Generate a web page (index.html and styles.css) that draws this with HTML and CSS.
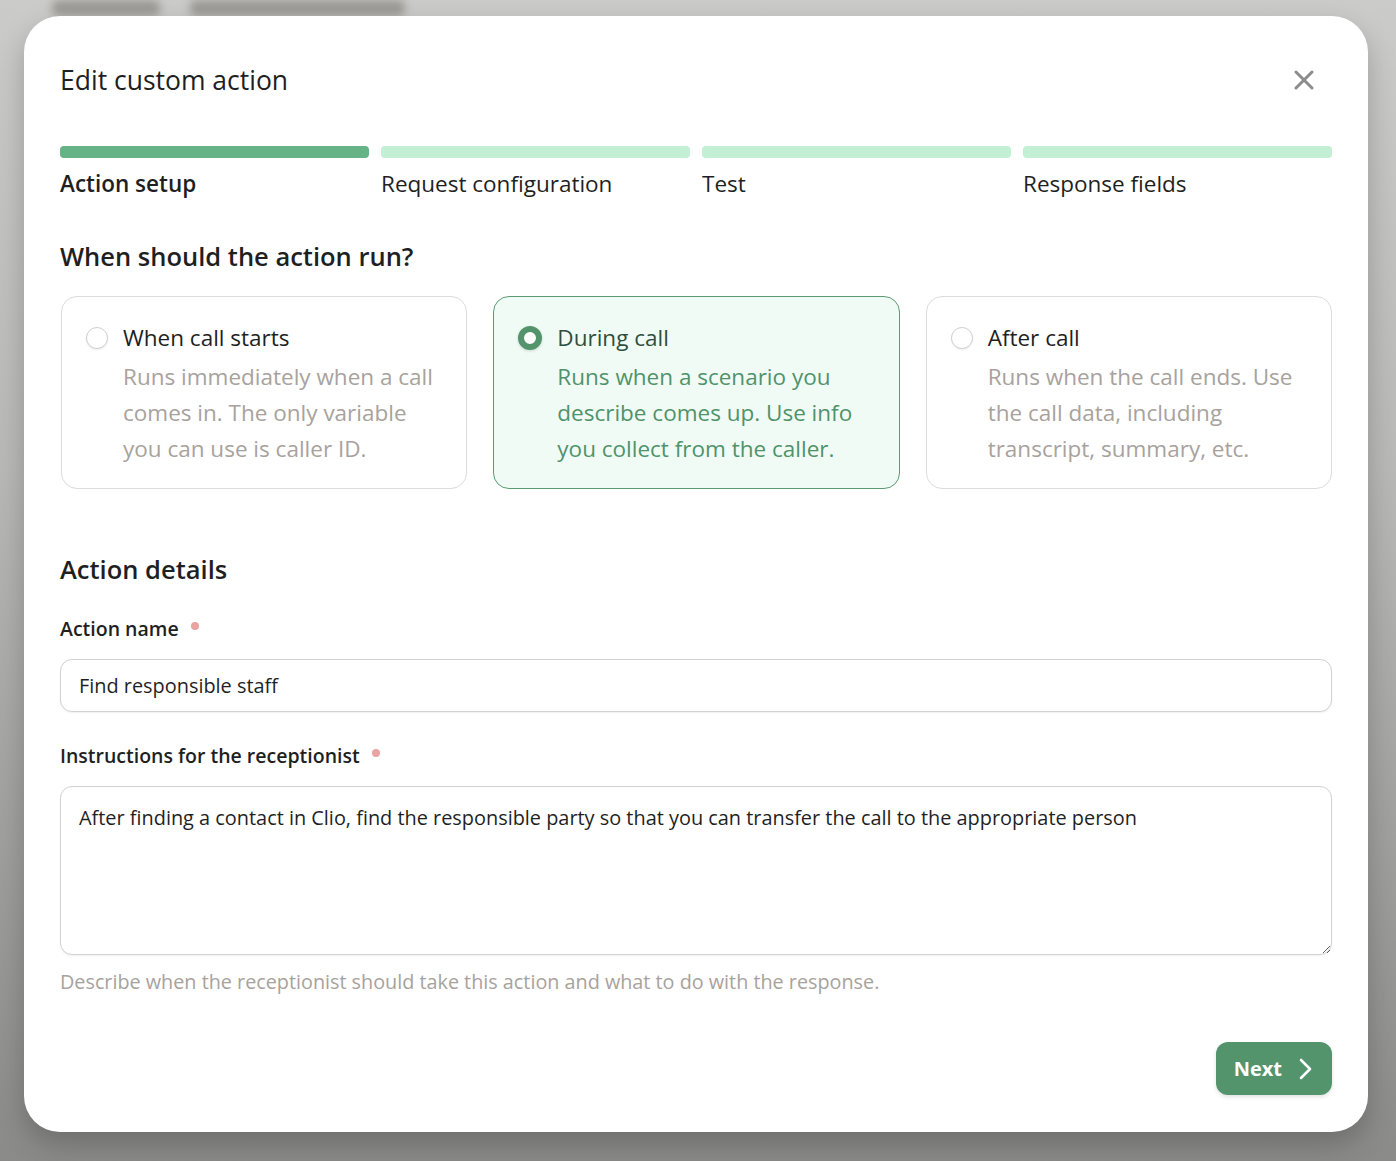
FILE: index.html
```html
<!DOCTYPE html>
<html lang="en">
<head>
    <meta charset="UTF-8">
    <meta name="viewport" content="width=device-width, initial-scale=1.0">
    <title>Edit custom action</title>
    <link rel="stylesheet" href="styles.css">
</head>
<body>
    <div class="backdrop">
        <div class="ghost-tabs">
            <span class="ghost ghost-a"></span>
            <span class="ghost ghost-b"></span>
        </div>
    </div>

    <div class="modal">
        <div class="modal-header">
            <h1>Edit custom action</h1>
            <button class="close-btn" aria-label="Close">
                <svg width="20" height="20" viewBox="0 0 20 20"><path d="M2 2 L18 18 M18 2 L2 18" stroke="#8c8c8c" stroke-width="3" stroke-linecap="round"/></svg>
            </button>
        </div>

        <div class="steps">
            <div class="step active"><div class="bar"></div><span>Action setup</span></div>
            <div class="step"><div class="bar"></div><span>Request configuration</span></div>
            <div class="step"><div class="bar"></div><span>Test</span></div>
            <div class="step"><div class="bar"></div><span>Response fields</span></div>
        </div>

        <h2 class="question">When should the action run?</h2>

        <div class="options">
            <div class="option">
                <span class="radio"></span>
                <div>
                    <div class="option-title">When call starts</div>
                    <div class="option-desc">Runs immediately when a call comes in. The only variable you can use is caller ID.</div>
                </div>
            </div>
            <div class="option selected">
                <span class="radio"></span>
                <div>
                    <div class="option-title">During call</div>
                    <div class="option-desc">Runs when a scenario you describe comes up. Use info you collect from the caller.</div>
                </div>
            </div>
            <div class="option">
                <span class="radio"></span>
                <div>
                    <div class="option-title">After call</div>
                    <div class="option-desc">Runs when the call ends. Use the call data, including transcript, summary, etc.</div>
                </div>
            </div>
        </div>

        <h2 class="section-title">Action details</h2>

        <label class="field-label">Action name <span class="req"></span></label>
        <input class="text-input" type="text" value="Find responsible staff">

        <label class="field-label second">Instructions for the receptionist <span class="req"></span></label>
        <textarea class="text-area">After finding a contact in Clio, find the responsible party so that you can transfer the call to the appropriate person</textarea>
        <div class="hint">Describe when the receptionist should take this action and what to do with the response.</div>

        <div class="footer">
            <button class="next-btn">Next
                <svg width="14" height="22" viewBox="0 0 14 22"><path d="M3 2 L12 11 L3 20" fill="none" stroke="#fff" stroke-width="2.6" stroke-linecap="round" stroke-linejoin="round"/></svg>
            </button>
        </div>
    </div>
</body>
</html>
```

FILE: styles.css
```css
* {
    box-sizing: border-box;
}
body {
    margin: 0;
    height: 1161px;
    overflow: hidden;
    font-family: "Open Sans", "Noto Sans", sans-serif;
    color: #1f1f1f;
    background: linear-gradient(180deg, #cbcbc9 0%, #b9b9b7 40%, #8a8a88 100%);
    padding: 16px 28px 0 24px;
}
.backdrop {
    position: absolute;
    top: 0;
    left: 0;
    right: 0;
    height: 16px;
}
.ghost-tabs {
    display: flex;
    gap: 30px;
    padding: 0 0 0 52px;
}
.ghost {
    display: block;
    height: 16px;
    border-radius: 6px;
    background: #9b9a96;
    filter: blur(4px);
}
.ghost-a { width: 108px; }
.ghost-b { width: 215px; }

.modal {
    position: relative;
    width: 1344px;
    height: 1116px;
    background: #fff;
    border-radius: 36px;
    padding: 36px 36px 37px;
    display: flex;
    flex-direction: column;
    box-shadow: 0 12px 28px rgba(0, 0, 0, 0.22);
}
.modal-header {
    display: flex;
    justify-content: space-between;
    align-items: center;
    height: 56px;
}
.modal-header h1 {
    margin: 0;
    font-size: 26.5px;
    font-weight: 500;
    line-height: 56px;
}
.close-btn {
    border: none;
    background: none;
    padding: 0;
    margin-right: 18px;
    width: 20px;
    height: 20px;
    cursor: pointer;
}

.steps {
    display: grid;
    grid-template-columns: repeat(4, 1fr);
    gap: 12px;
    margin-top: 38px;
}
.step .bar {
    height: 12px;
    border-radius: 4px;
    background: #c3efd4;
}
.step.active .bar {
    background: #66b388;
}
.step span {
    display: block;
    margin-top: 11px;
    font-size: 22.5px;
    line-height: 30px;
}
.step.active span {
    font-weight: 600;
}

.question {
    margin: 41px 0 0;
    font-size: 25.5px;
    font-weight: 600;
    line-height: 32px;
}

.options {
    display: grid;
    grid-template-columns: repeat(3, 1fr);
    gap: 26px;
    margin-top: 24px;
    padding-left: 1px;
}
.option {
    display: flex;
    gap: 15px;
    border: 1px solid #dcdcdc;
    border-radius: 16px;
    padding: 23px 16px 20px 24px;
    height: 193px;
}
.radio {
    flex: none;
    width: 22px;
    height: 22px;
    margin-top: 7px;
    border-radius: 50%;
    border: 1px solid #cfcfcf;
    background: #fff;
    box-shadow: 0 1px 2px rgba(0, 0, 0, 0.08);
}
.option-title {
    font-size: 22.5px;
    line-height: 36px;
}
.option-desc {
    margin-top: 3px;
    font-size: 22.5px;
    line-height: 36px;
    color: #a8a29d;
}
.option.selected {
    background: #f1fbf5;
    border-color: #5c9a74;
}
.option.selected .radio {
    width: 24px;
    height: 24px;
    margin-top: 6px;
    border: 6px solid #53946d;
    box-shadow: 0 1px 3px rgba(0, 0, 0, 0.15);
}
.option.selected .option-title {
    color: #2f4f3c;
}
.option.selected .option-desc {
    color: #4f936b;
}

.section-title {
    margin: 62px 0 0;
    font-size: 25.5px;
    font-weight: 600;
    line-height: 36px;
}
.field-label {
    display: flex;
    align-items: center;
    gap: 12px;
    margin-top: 28px;
    font-size: 19.5px;
    font-weight: 600;
    line-height: 28px;
}
.field-label.second {
    margin-top: 30px;
}
.req {
    width: 8px;
    height: 8px;
    border-radius: 50%;
    background: #e9a3a3;
    margin-top: -6px;
}
.text-input,
.text-area {
    display: block;
    width: 100%;
    margin-top: 16px;
    border: 1px solid #d2d2d2;
    border-radius: 12px;
    font-family: inherit;
    font-size: 19.9px;
    color: #1f1f1f;
    box-shadow: 0 1px 2px rgba(0, 0, 0, 0.06);
    outline: none;
}
.text-input {
    height: 53px;
    padding: 0 18px;
}
.text-area {
    height: 169px;
    padding: 17px 18px;
    line-height: 28px;
    resize: vertical;
}
.hint {
    margin-top: 13px;
    font-size: 19.8px;
    line-height: 28px;
    color: #a8a29d;
}

.footer {
    margin-top: auto;
    display: flex;
    justify-content: flex-end;
}
.next-btn {
    display: flex;
    align-items: center;
    gap: 16px;
    height: 53px;
    padding: 0 20px 0 18px;
    border: none;
    border-radius: 12px;
    background: #53946d;
    color: #fff;
    font-family: inherit;
    font-size: 20px;
    font-weight: 700;
    cursor: pointer;
    box-shadow: 0 2px 4px rgba(0, 0, 0, 0.12);
}
```
